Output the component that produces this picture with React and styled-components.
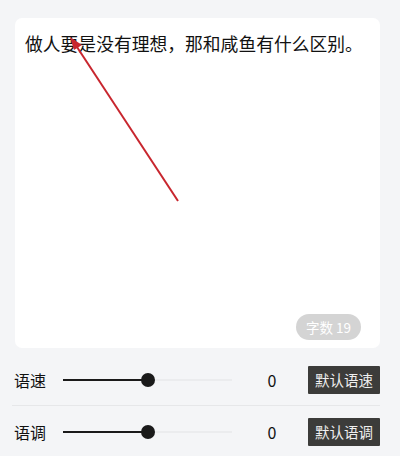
import React from 'react'
import styled, { createGlobalStyle } from 'styled-components'

const GlobalStyle = createGlobalStyle`
  html, body {
    margin: 0;
    padding: 0;
    background: #f4f5f7;
    font-family: "Noto Sans CJK SC", "Noto Sans", sans-serif;
  }
`

const Page = styled.div`
  width: 400px;
  height: 456px;
  overflow: hidden;
  padding: 18px 20px 0 12px;
  box-sizing: border-box;
`

const Card = styled.div`
  position: relative;
  margin-left: 3px;
  height: 330px;
  background: #fff;
  border-radius: 7px;
  padding: 13px 10px;
  box-sizing: border-box;
  display: flex;
  flex-direction: column;
  justify-content: space-between;
`

const Content = styled.div`
  font-size: 17.8px;
  line-height: 24px;
  color: #111;
`

const Badge = styled.div`
  align-self: flex-end;
  margin-right: 9px;
  margin-bottom: -5px;
  height: 26px;
  padding: 0 10px;
  border-radius: 13px;
  background: #d4d4d4;
  color: #fff;
  font-size: 13.5px;
  display: flex;
  align-items: center;
`

const Arrow = styled.svg`
  position: absolute;
  left: 0;
  top: 0;
  pointer-events: none;
`

const Row = styled.div`
  display: flex;
  align-items: center;
  height: 51px;
  border-top: ${p => (p.$divider ? '1px solid #e6e7e9' : 'none')};
  margin-top: ${p => (p.$divider ? '0' : '6px')};
`

const Label = styled.div`
  width: 51px;
  box-sizing: border-box;
  padding-left: 2px;
  font-size: 16px;
  color: #111;
`

const Track = styled.div`
  position: relative;
  width: 169px;
  height: 2px;
  background: #ebecee;
`

const Fill = styled.div`
  height: 100%;
  background: #1a1a1a;
`

const Thumb = styled.div`
  position: absolute;
  top: 50%;
  width: 14px;
  height: 14px;
  margin: -7px 0 0 -7px;
  border-radius: 50%;
  background: #1a1a1a;
`

const Value = styled.div`
  width: 76px;
  box-sizing: border-box;
  padding-left: 4px;
  text-align: center;
  font-size: 16px;
  color: #111;
`

const Button = styled.button`
  height: 28px;
  width: 72px;
  padding: 0;
  border: none;
  border-radius: 1px;
  background: #3c3c3a;
  color: #f0f0f0;
  font-family: inherit;
  font-size: 14.5px;
`

const Slider = ({ value }) => (
  <Track>
    <Fill style={{ width: `${value}%` }} />
    <Thumb style={{ left: `${value}%` }} />
  </Track>
)

const ControlRow = ({ label, button, divider }) => (
  <Row $divider={divider}>
    <Label>{label}</Label>
    <Slider value={50} />
    <Value>0</Value>
    <Button>{button}</Button>
  </Row>
)

export default function App() {
  return (
    <>
      <GlobalStyle />
      <Page>
        <Card>
          <Content>做人要是没有理想，那和咸鱼有什么区别。</Content>
          <Badge>字数 19</Badge>
          <Arrow width="365" height="330" viewBox="0 0 365 330">
            <line x1="163" y1="183" x2="60" y2="26" stroke="#c8262e" strokeWidth="2" />
            <polygon points="55,19 67,27 59,32" fill="#c8262e" />
          </Arrow>
        </Card>
        <ControlRow label="语速" button="默认语速" />
        <ControlRow label="语调" button="默认语调" divider />
      </Page>
    </>
  )
}
